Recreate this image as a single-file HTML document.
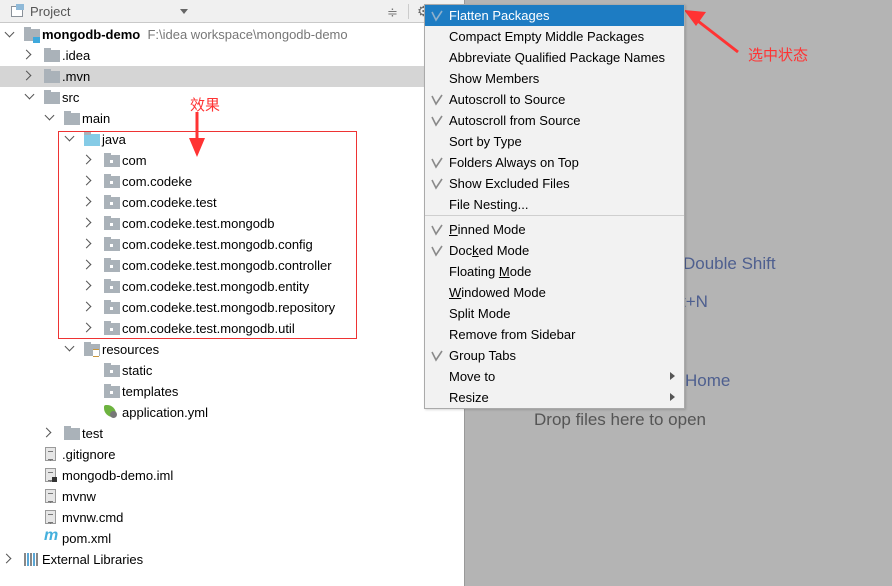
<!DOCTYPE html>
<html><head><meta charset="utf-8"><style>
*{margin:0;padding:0;box-sizing:border-box}
body{width:892px;height:586px;overflow:hidden;background:#fff;font-family:"Liberation Sans","Noto Sans CJK SC",sans-serif;font-size:13px;color:#000;position:relative}
.a{position:absolute;white-space:nowrap}
.row{position:absolute;height:21px;line-height:21px;white-space:nowrap}
.chev{position:absolute;width:7px;height:7px;border-right:1.8px solid #555;border-bottom:1.8px solid #555}
.cr{transform:rotate(-45deg)}
.cd{transform:rotate(45deg)}
.fold{position:absolute;width:16px;height:12px;background:#aab2b9}
.fold:before{content:"";position:absolute;left:0;top:-2px;width:7px;height:3px;background:#aab2b9}
.pk:after{content:"";position:absolute;left:6px;top:5px;width:3px;height:3px;background:#fff}
.file{position:absolute;width:11px;height:14px;background:#e6e6e6;border:1px solid #9a9a9a}
.file:after{content:"";position:absolute;left:2px;top:3px;width:5px;height:7px;border-top:1px solid #777;border-bottom:1px solid #777;box-shadow:0 3px 0 -2px #777}
.mi{position:absolute;left:449px;height:21px;line-height:21px;white-space:nowrap}
.ck{position:absolute;left:430px;width:14px;height:12px}
</style></head><body>
<div class="a" style="left:464px;top:0;width:428px;height:586px;background:#b4b4b4"></div>
<div class="a" style="left:683px;top:254px;font-size:17px;color:#4e5f8f">Double Shift</div>
<div class="a" style="left:681px;top:292px;font-size:17px;color:#4e5f8f">t+N</div>
<div class="a" style="left:685px;top:371px;font-size:17px;color:#4e5f8f">Home</div>
<div class="a" style="left:534px;top:410px;font-size:17px;color:#555">Drop files here to open</div>
<div class="a" style="left:464px;top:0;width:1px;height:586px;background:#999"></div>

<div class="a" style="left:0;top:0;width:464px;height:23px;background:#f0f0f0;border-bottom:1px solid #c9c9c9"></div>
<div class="a" style="left:11px;top:6px;width:12px;height:11px;border:1.5px solid #8a9199;background:#fff"></div>
<div class="a" style="left:16px;top:4px;width:8px;height:6px;background:#8fb9d8"></div>
<div class="a" style="left:30px;top:4px;font-size:13px;color:#555">Project</div>
<div class="a" style="left:180px;top:9px;width:0;height:0;border-left:4px solid transparent;border-right:4px solid transparent;border-top:5px solid #666"></div>
<div class="a" style="left:387px;top:5px;font-size:13px;color:#777">≑</div>
<div class="a" style="left:408px;top:4px;width:1px;height:15px;background:#ccc"></div>
<div class="a" style="left:417px;top:3px;font-size:14px;color:#666">⚙</div>

<div class="a" style="left:0;top:66px;width:464px;height:21px;background:#d5d5d5"></div>

<div class="chev cd" style="left:6px;top:29px"></div>
<div class="fold" style="left:24px;top:29px"></div>
<div class="a" style="left:33px;top:37px;width:7px;height:6px;background:#3fa9dc"></div>
<div class="row" style="left:42px;top:24px"><b>mongodb-demo</b> <span style="color:#777">&nbsp;F:\idea workspace\mongodb-demo</span></div>

<div class="chev cr" style="left:23px;top:51px"></div><div class="fold" style="left:44px;top:50px"></div><div class="row" style="left:62px;top:45px">.idea</div>
<div class="chev cr" style="left:23px;top:72px"></div><div class="fold" style="left:44px;top:71px"></div><div class="row" style="left:62px;top:66px">.mvn</div>
<div class="chev cd" style="left:26px;top:91px"></div><div class="fold" style="left:44px;top:92px"></div><div class="row" style="left:62px;top:87px">src</div>
<div class="chev cd" style="left:46px;top:112px"></div><div class="fold" style="left:64px;top:113px"></div><div class="row" style="left:82px;top:108px">main</div>
<div class="chev cd" style="left:66px;top:133px"></div><div class="fold" style="left:84px;top:134px;background:#85cbe6"></div><div class="row" style="left:102px;top:129px">java</div>

<div class="chev cr" style="left:83px;top:156px"></div><div class="fold pk" style="left:104px;top:155px"></div><div class="row" style="left:122px;top:150px">com</div>
<div class="chev cr" style="left:83px;top:177px"></div><div class="fold pk" style="left:104px;top:176px"></div><div class="row" style="left:122px;top:171px">com.codeke</div>
<div class="chev cr" style="left:83px;top:198px"></div><div class="fold pk" style="left:104px;top:197px"></div><div class="row" style="left:122px;top:192px">com.codeke.test</div>
<div class="chev cr" style="left:83px;top:219px"></div><div class="fold pk" style="left:104px;top:218px"></div><div class="row" style="left:122px;top:213px">com.codeke.test.mongodb</div>
<div class="chev cr" style="left:83px;top:240px"></div><div class="fold pk" style="left:104px;top:239px"></div><div class="row" style="left:122px;top:234px">com.codeke.test.mongodb.config</div>
<div class="chev cr" style="left:83px;top:261px"></div><div class="fold pk" style="left:104px;top:260px"></div><div class="row" style="left:122px;top:255px">com.codeke.test.mongodb.controller</div>
<div class="chev cr" style="left:83px;top:282px"></div><div class="fold pk" style="left:104px;top:281px"></div><div class="row" style="left:122px;top:276px">com.codeke.test.mongodb.entity</div>
<div class="chev cr" style="left:83px;top:303px"></div><div class="fold pk" style="left:104px;top:302px"></div><div class="row" style="left:122px;top:297px">com.codeke.test.mongodb.repository</div>
<div class="chev cr" style="left:83px;top:324px"></div><div class="fold pk" style="left:104px;top:323px"></div><div class="row" style="left:122px;top:318px">com.codeke.test.mongodb.util</div>

<div class="a" style="left:58px;top:131px;width:299px;height:208px;border:1px solid #e33"></div>

<div class="chev cd" style="left:66px;top:343px"></div><div class="fold" style="left:84px;top:344px"></div><div class="a" style="left:93px;top:349px;width:6px;height:8px;border-top:1px solid #c9963a;border-bottom:1px solid #c9963a;background:#fff"></div><div class="row" style="left:102px;top:339px">resources</div>
<div class="fold pk" style="left:104px;top:365px"></div><div class="row" style="left:122px;top:360px">static</div>
<div class="fold pk" style="left:104px;top:386px"></div><div class="row" style="left:122px;top:381px">templates</div>
<div class="a" style="left:104px;top:405px;width:12px;height:12px;border-radius:2px 9px 2px 9px;background:#6db33f"></div><div class="a" style="left:110px;top:411px;width:7px;height:7px;border-radius:50%;background:#777"></div><div class="row" style="left:122px;top:402px">application.yml</div>
<div class="chev cr" style="left:43px;top:429px"></div><div class="fold" style="left:64px;top:428px"></div><div class="row" style="left:82px;top:423px">test</div>

<div class="file" style="left:45px;top:447px"></div><div class="row" style="left:62px;top:444px">.gitignore</div>
<div class="file" style="left:45px;top:468px"></div><div class="a" style="left:52px;top:477px;width:5px;height:5px;background:#333"></div><div class="row" style="left:62px;top:465px">mongodb-demo.iml</div>
<div class="file" style="left:45px;top:489px"></div><div class="row" style="left:62px;top:486px">mvnw</div>
<div class="file" style="left:45px;top:510px"></div><div class="row" style="left:62px;top:507px">mvnw.cmd</div>
<div class="a" style="left:44px;top:527px;font-size:16px;font-style:italic;font-weight:bold;color:#45b0dd">m</div><div class="row" style="left:62px;top:528px">pom.xml</div>
<div class="chev cr" style="left:3px;top:555px"></div>
<div class="a" style="left:24px;top:553px;width:14px;height:13px;background:repeating-linear-gradient(90deg,#888 0 2px,transparent 2px 3px,#5aa7d6 3px 5px,transparent 5px 6px)"></div>
<div class="row" style="left:42px;top:549px">External Libraries</div>

<div class="a" style="left:190px;top:94px;font-size:15px;color:#f33">效果</div>
<svg class="a" style="left:185px;top:112px" width="24" height="48"><path d="M12 0 L12 30" stroke="#f33" stroke-width="3"/><path d="M4 26 L20 26 L12 45 Z" fill="#f33"/></svg>
<svg class="a" style="left:680px;top:2px" width="70" height="60"><path d="M58 50 L14 16" stroke="#f33" stroke-width="3"/><path d="M4 8 L26 10 L16 24 Z" fill="#f33"/></svg>
<div class="a" style="left:748px;top:44px;font-size:15px;color:#f33">选中状态</div>

<div class="a" style="left:424px;top:4px;width:261px;height:405px;background:#f2f2f2;border:1px solid #aaa;box-shadow:1px 1px 2px rgba(0,0,0,.15)"></div>
<div class="a" style="left:425px;top:5px;width:259px;height:21px;background:#1d7cc3"></div>
<div class="a" style="left:425px;top:215px;width:259px;height:1px;background:#cfcfcf"></div>

<svg class="ck" style="top:10px" viewBox="0 0 14 12"><path d="M2 2 L6 10 L12 1" fill="none" stroke="#8fb0cc" stroke-width="1.6"/></svg><div class="mi" style="top:5px;color:#fff">Flatten Packages</div>
<div class="mi" style="top:26px">Compact Empty Middle Packages</div>
<div class="mi" style="top:47px">Abbreviate Qualified Package Names</div>
<div class="mi" style="top:68px">Show Members</div>
<svg class="ck" style="top:94px" viewBox="0 0 14 12"><path d="M2 2 L6 10 L12 1" fill="none" stroke="#8a8a8a" stroke-width="1.6"/></svg><div class="mi" style="top:89px">Autoscroll to Source</div>
<svg class="ck" style="top:115px" viewBox="0 0 14 12"><path d="M2 2 L6 10 L12 1" fill="none" stroke="#8a8a8a" stroke-width="1.6"/></svg><div class="mi" style="top:110px">Autoscroll from Source</div>
<div class="mi" style="top:131px">Sort by Type</div>
<svg class="ck" style="top:157px" viewBox="0 0 14 12"><path d="M2 2 L6 10 L12 1" fill="none" stroke="#8a8a8a" stroke-width="1.6"/></svg><div class="mi" style="top:152px">Folders Always on Top</div>
<svg class="ck" style="top:178px" viewBox="0 0 14 12"><path d="M2 2 L6 10 L12 1" fill="none" stroke="#8a8a8a" stroke-width="1.6"/></svg><div class="mi" style="top:173px">Show Excluded Files</div>
<div class="mi" style="top:194px">File Nesting...</div>

<svg class="ck" style="top:224px" viewBox="0 0 14 12"><path d="M2 2 L6 10 L12 1" fill="none" stroke="#8a8a8a" stroke-width="1.6"/></svg><div class="mi" style="top:219px"><u>P</u>inned Mode</div>
<svg class="ck" style="top:245px" viewBox="0 0 14 12"><path d="M2 2 L6 10 L12 1" fill="none" stroke="#8a8a8a" stroke-width="1.6"/></svg><div class="mi" style="top:240px">Doc<u>k</u>ed Mode</div>
<div class="mi" style="top:261px">Floating <u>M</u>ode</div>
<div class="mi" style="top:282px"><u>W</u>indowed Mode</div>
<div class="mi" style="top:303px">Split Mode</div>
<div class="mi" style="top:324px">Remove from Sidebar</div>
<svg class="ck" style="top:350px" viewBox="0 0 14 12"><path d="M2 2 L6 10 L12 1" fill="none" stroke="#8a8a8a" stroke-width="1.6"/></svg><div class="mi" style="top:345px">Group Tabs</div>
<div class="mi" style="top:366px">Move to</div>
<div class="mi" style="top:387px">Resize</div>
<div class="a" style="left:670px;top:372px;border-top:4px solid transparent;border-bottom:4px solid transparent;border-left:5px solid #555"></div>
<div class="a" style="left:670px;top:393px;border-top:4px solid transparent;border-bottom:4px solid transparent;border-left:5px solid #555"></div>
</body></html>
